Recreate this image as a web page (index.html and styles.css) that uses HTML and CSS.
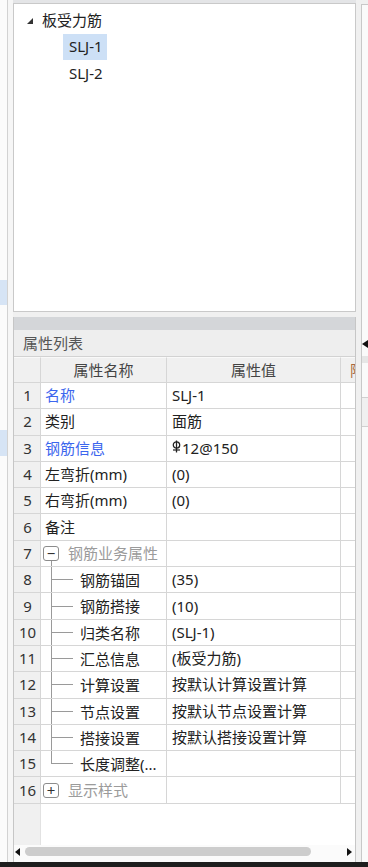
FILE: index.html
```html
<!DOCTYPE html>
<html lang="zh-CN">
<head>
    <meta charset="UTF-8">
    <meta name="viewport" content="width=device-width, initial-scale=1.0">
    <title>属性列表</title>
    <link rel="stylesheet" href="styles.css">
</head>
<body>
    <div id="screen">
        <!-- left dock edge -->
        <div class="left">
            <div class="left-bar">
                <div class="left-hl hl-a"></div>
                <div class="left-hl hl-b"></div>
            </div>
        </div>

        <div class="main">
            <div class="top-bar"></div>

            <!-- component tree -->
            <div class="tree">
                <div class="tree-row root">
                    <svg class="expand" width="6" height="6" viewBox="0 0 6 6"><polygon points="6,0 6,6 0,6" fill="#333"/></svg>
                    <span>板受力筋</span>
                </div>
                <div class="tree-row child"><span class="selected">SLJ-1</span></div>
                <div class="tree-row child"><span class="item">SLJ-2</span></div>
            </div>

            <!-- property list -->
            <div class="prop">
                <div class="prop-bar"></div>
                <div class="prop-title">属性列表</div>
                <div class="table">
                    <div class="cell num head"></div>
                    <div class="cell head center">属性名称</div>
                    <div class="cell head center">属性值</div>
                    <div class="cell head last">附加</div>

                    <div class="cell num">1</div>
                    <div class="cell name link">名称</div>
                    <div class="cell val">SLJ-1</div>
                    <div class="cell last"></div>

                    <div class="cell num">2</div>
                    <div class="cell name">类别</div>
                    <div class="cell val">面筋</div>
                    <div class="cell last"></div>

                    <div class="cell num">3</div>
                    <div class="cell name link">钢筋信息</div>
                    <div class="cell val"><svg class="grade" width="9" height="13" viewBox="0 0 9 13"><circle cx="4.5" cy="5" r="3.2" fill="none" stroke="#222" stroke-width="1.3"/><line x1="4.5" y1="0.5" x2="4.5" y2="12.5" stroke="#222" stroke-width="1.3"/><line x1="1" y1="10" x2="8" y2="10" stroke="#222" stroke-width="1.2"/></svg>12@150</div>
                    <div class="cell last"></div>

                    <div class="cell num">4</div>
                    <div class="cell name">左弯折(mm)</div>
                    <div class="cell val">(0)</div>
                    <div class="cell last"></div>

                    <div class="cell num">5</div>
                    <div class="cell name">右弯折(mm)</div>
                    <div class="cell val">(0)</div>
                    <div class="cell last"></div>

                    <div class="cell num">6</div>
                    <div class="cell name">备注</div>
                    <div class="cell val"></div>
                    <div class="cell last"></div>

                    <div class="cell num">7</div>
                    <div class="cell name group open"><span class="toggle">−</span><span class="muted">钢筋业务属性</span></div>
                    <div class="cell val"></div>
                    <div class="cell last"></div>

                    <div class="cell num">8</div>
                    <div class="cell name sub"><span class="guide"></span>钢筋锚固</div>
                    <div class="cell val">(35)</div>
                    <div class="cell last"></div>

                    <div class="cell num">9</div>
                    <div class="cell name sub"><span class="guide"></span>钢筋搭接</div>
                    <div class="cell val">(10)</div>
                    <div class="cell last"></div>

                    <div class="cell num">10</div>
                    <div class="cell name sub"><span class="guide"></span>归类名称</div>
                    <div class="cell val">(SLJ-1)</div>
                    <div class="cell last"></div>

                    <div class="cell num">11</div>
                    <div class="cell name sub"><span class="guide"></span>汇总信息</div>
                    <div class="cell val">(板受力筋)</div>
                    <div class="cell last"></div>

                    <div class="cell num">12</div>
                    <div class="cell name sub"><span class="guide"></span>计算设置</div>
                    <div class="cell val">按默认计算设置计算</div>
                    <div class="cell last"></div>

                    <div class="cell num">13</div>
                    <div class="cell name sub"><span class="guide"></span>节点设置</div>
                    <div class="cell val">按默认节点设置计算</div>
                    <div class="cell last"></div>

                    <div class="cell num">14</div>
                    <div class="cell name sub"><span class="guide"></span>搭接设置</div>
                    <div class="cell val">按默认搭接设置计算</div>
                    <div class="cell last"></div>

                    <div class="cell num">15</div>
                    <div class="cell name sub"><span class="guide end"></span>长度调整(...</div>
                    <div class="cell val"></div>
                    <div class="cell last"></div>

                    <div class="cell num">16</div>
                    <div class="cell name group"><span class="toggle">+</span><span class="muted">显示样式</span></div>
                    <div class="cell val"></div>
                    <div class="cell last"></div>
                </div>

                <div class="filler">
                    <div class="filler-num"></div>
                </div>

                <div class="hscroll">
                    <svg width="5" height="8" viewBox="0 0 5 8"><polygon points="5,0 5,8 0,4" fill="#111"/></svg>
                    <div class="thumb"></div>
                    <svg width="5" height="8" viewBox="0 0 5 8"><polygon points="0,0 0,8 5,4" fill="#111"/></svg>
                </div>
            </div>
        </div>

        <!-- right dock edge -->
        <div class="right">
            <div class="right-gap"></div>
            <div class="right-panel">
                <svg class="right-arrow" width="6" height="8" viewBox="0 0 6 8"><polygon points="6,0 6,8 0,4" fill="#111"/></svg>
                <div class="right-band"></div>
                <div class="right-box"></div>
            </div>
        </div>
    </div>
    <div class="footer"></div>
</body>
</html>
```

FILE: styles.css
```css
body {
    margin: 0;
    padding: 0;
    background: #f0f0f0;
    font-family: "Noto Sans", "Noto Sans CJK SC", sans-serif;
    font-size: 15px;
    color: #222;
    overflow: hidden;
}

#screen {
    display: flex;
    height: 862px;
}

.footer {
    height: 5px;
    background: #1e1e1e;
}

/* left edge */
.left {
    width: 13px;
    display: flex;
    background: #f6f6f6;
}

.left-bar {
    width: 7px;
    background: #fbfbfb;
    border-right: 1px solid #d2d2d2;
}

.left-hl {
    background: #d6e4f5;
}

.hl-a {
    margin-top: 280px;
    height: 25px;
}

.hl-b {
    margin-top: 125px;
    height: 26px;
}

/* main column */
.main {
    width: 343px;
    display: flex;
    flex-direction: column;
}

.top-bar {
    height: 3px;
    background: #e4e5e7;
}

.tree {
    height: 309px;
    box-sizing: border-box;
    background: #fff;
    border: 1px solid #c9c9c9;
    padding-top: 3px;
}

.tree-row {
    height: 26.5px;
    display: flex;
    align-items: center;
    line-height: 1;
}

.root {
    padding-left: 13px;
}

.expand {
    margin-right: 9px;
    margin-top: 1px;
}

.child {
    padding-left: 49px;
}

.selected,
.item {
    height: 100%;
    display: flex;
    align-items: center;
    padding: 0 4px 0 6px;
}

.selected {
    background: #cde0f6;
}

/* property list */
.prop {
    margin-top: 5px;
    flex: 1;
    display: flex;
    flex-direction: column;
    background: #fff;
    border-left: 1px solid #c6c6c6;
    border-right: 1px solid #c6c6c6;
}

.prop-bar {
    height: 13px;
    background: #d4d6d9;
}

.prop-title {
    height: 26px;
    background: #eeeeee;
    border-bottom: 1px solid #d2d2d2;
    display: flex;
    align-items: center;
    padding-left: 9px;
    color: #555;
    line-height: 1;
}

.table {
    display: grid;
    grid-template-columns: 27px 126px 174px 1fr;
    grid-template-rows: 26px;
    grid-auto-rows: 26.3px;
}

.cell {
    display: flex;
    align-items: center;
    border-right: 1px solid #d6d6d6;
    border-bottom: 1px solid #d6d6d6;
    line-height: 1;
    white-space: nowrap;
    overflow: hidden;
    box-sizing: border-box;
}

.cell.last {
    border-right: none;
}

.head {
    background: #f0f0f0;
    color: #444;
    border-top: 1px solid #f9f9f9;
}

.center {
    justify-content: center;
}

.head.last {
    padding-left: 9px;
    color: #a86a3a;
}

.num {
    background: #f0f0f0;
    justify-content: center;
    color: #333;
    padding-left: 1px;
}

.name {
    padding-left: 4px;
}

.val {
    padding-left: 5px;
}

.link {
    color: #3c66ee;
}

.muted {
    color: #9b9b9b;
}

.grade {
    margin-right: 1px;
    margin-top: -3px;
}

.group {
    padding-left: 2px;
}

.group.open {
    background: linear-gradient(#9a9a9a, #9a9a9a) 10px 100% / 1px 5px no-repeat;
}

.toggle {
    flex-shrink: 0;
    box-sizing: border-box;
    width: 16px;
    height: 15px;
    border: 1px solid #8c8c8c;
    border-radius: 3px;
    display: flex;
    align-items: center;
    justify-content: center;
    font-size: 15px;
    color: #333;
    margin-right: 9px;
    background: #fff;
}

.sub {
    padding-left: 10px;
    align-items: stretch;
    line-height: 26px;
}

.sub .guide {
    width: 22px;
    margin-right: 7px;
    background:
        linear-gradient(#9a9a9a, #9a9a9a) 0 0 / 1px 100% no-repeat,
        linear-gradient(#9a9a9a, #9a9a9a) 0 50% / 100% 1px no-repeat;
}

.sub .guide.end {
    background:
        linear-gradient(#9a9a9a, #9a9a9a) 0 0 / 1px 50% no-repeat,
        linear-gradient(#9a9a9a, #9a9a9a) 0 50% / 100% 1px no-repeat;
}

.filler {
    flex: 1;
    display: flex;
}

.filler-num {
    width: 26px;
    background: #f0f0f0;
    border-right: 1px solid #e2e2e2;
}

.hscroll {
    height: 13px;
    display: flex;
    align-items: center;
    gap: 5px;
    padding: 0 3px 4px 1px;
    background: #fbfbfb;
}

.thumb {
    width: 286px;
    height: 9px;
    border-radius: 5px;
    background: #cdcdcd;
    margin-right: auto;
}

/* right edge */
.right {
    flex: 1;
    display: flex;
}

.right-gap {
    width: 5px;
    background: #f0f0f0;
}

.right-panel {
    flex: 1;
    border-left: 1px solid #c8c8c8;
    border-top: 1px solid #c8c8c8;
    margin-top: 4px;
    background: #fafafa;
    display: flex;
    flex-direction: column;
}

.right-arrow {
    margin-top: 335px;
}

.right-band {
    margin-top: 8px;
    height: 7px;
    background: #e6e6e6;
}

.right-box {
    margin-top: 34px;
    height: 28px;
    border-top: 1px solid #d0d0d0;
    border-bottom: 1px solid #d0d0d0;
    background: #f0f0f0;
}
```
